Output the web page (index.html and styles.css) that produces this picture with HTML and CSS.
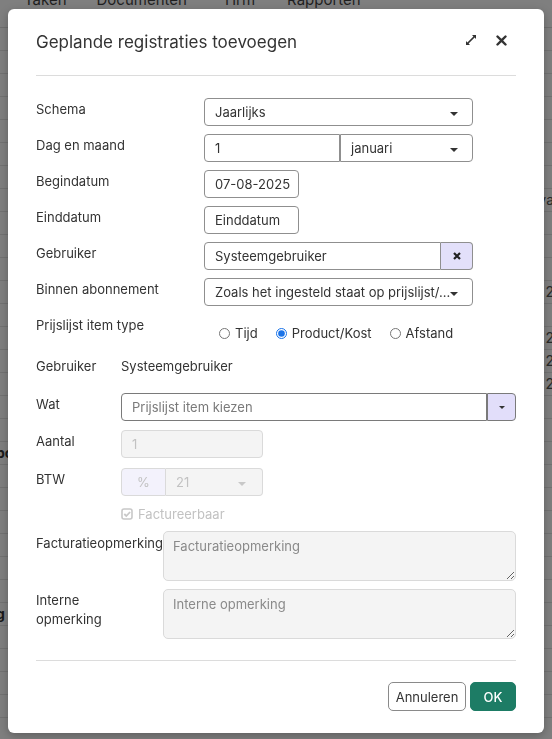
FILE: index.html
```html
<!DOCTYPE html>
<html lang="nl">
<head>
    <meta charset="UTF-8">
    <meta name="viewport" content="width=device-width, initial-scale=1.0">
    <title>Geplande registraties toevoegen</title>
    <link rel="stylesheet" href="styles.css">
</head>
<body>
    <!-- application behind the dialog -->
    <div class="app">
        <nav class="topnav">
            <span>Taken</span>
            <span>Documenten</span>
            <span>Hrm</span>
            <span>Rapporten</span>
        </nav>
        <div class="app-table">
            <div class="app-row"></div>
            <div class="app-row"></div>
            <div class="app-row"></div>
            <div class="app-row"></div>
            <div class="app-row"></div>
            <div class="app-row"></div>
            <div class="app-row"></div>
            <div class="app-row"><span class="app-cell-right">va</span></div>
            <div class="app-row"></div>
            <div class="app-row"></div>
            <div class="app-row"></div>
            <div class="app-row"><span class="app-cell-right">2</span></div>
            <div class="app-row"></div>
            <div class="app-row"><span class="app-cell-right">2</span></div>
            <div class="app-row"><span class="app-cell-right">2</span></div>
            <div class="app-row"><span class="app-cell-right">2</span></div>
            <div class="app-row"></div>
            <div class="app-row"></div>
            <div class="app-row"><span class="app-cell-left">pc</span></div>
            <div class="app-row"></div>
            <div class="app-row"></div>
            <div class="app-row"></div>
            <div class="app-row"></div>
            <div class="app-row"></div>
            <div class="app-row"></div>
            <div class="app-row"><span class="app-cell-left">g</span></div>
            <div class="app-row"></div>
            <div class="app-row"></div>
            <div class="app-row"></div>
            <div class="app-row"></div>
        </div>
    </div>

    <div class="modal">
        <div class="modal-header">
            <h1>Geplande registraties toevoegen</h1>
            <div class="modal-tools">
                <svg class="icon-expand" width="12" height="12" viewBox="0 0 12 12">
                    <path d="M7 1h4v4L9.6 3.6 3.6 9.6 5 11H1V7l1.4 1.4 6-6z" fill="#333"/>
                </svg>
                <svg class="icon-close" width="11" height="11" viewBox="0 0 11 11">
                    <path d="M1.5 1.5l8 8M9.5 1.5l-8 8" stroke="#333" stroke-width="2.4" stroke-linecap="round"/>
                </svg>
            </div>
        </div>

        <div class="modal-body">
            <div class="row">
                <label>Schema</label>
                <div class="select w-full">Jaarlijks<span class="caret"></span></div>
            </div>
            <div class="row">
                <label>Dag en maand</label>
                <div class="input w-day">1</div>
                <div class="select w-month">januari<span class="caret"></span></div>
            </div>
            <div class="row">
                <label>Begindatum</label>
                <div class="input w-date">07-08-2025</div>
            </div>
            <div class="row">
                <label>Einddatum</label>
                <div class="input w-date">Einddatum</div>
            </div>
            <div class="row">
                <label>Gebruiker</label>
                <div class="input-group w-full">
                    <div class="input grow">Systeemgebruiker</div>
                    <div class="addon addon-clear">
                        <svg width="8" height="8" viewBox="0 0 8 8">
                            <path d="M1 1l6 6M7 1L1 7" stroke="#222" stroke-width="2.2"/>
                        </svg>
                    </div>
                </div>
            </div>
            <div class="row">
                <label>Binnen abonnement</label>
                <div class="select w-full">Zoals het ingesteld staat op prijslijst/...<span class="caret"></span></div>
            </div>
            <div class="row row-radio">
                <label>Prijslijst item type</label>
                <div class="radios">
                    <label class="radio"><input type="radio" name="type"> Tijd</label>
                    <label class="radio"><input type="radio" name="type" checked> Product/Kost</label>
                    <label class="radio"><input type="radio" name="type"> Afstand</label>
                </div>
            </div>

            <div class="row row-narrow row-static">
                <label>Gebruiker</label>
                <div class="static">Systeemgebruiker</div>
            </div>
            <div class="row row-narrow row-wat">
                <label>Wat</label>
                <div class="input-group input-group-dark grow">
                    <div class="input placeholder grow">Prijslijst item kiezen</div>
                    <div class="addon addon-drop"><span class="caret caret-small"></span></div>
                </div>
            </div>
            <div class="row row-narrow">
                <label>Aantal</label>
                <div class="input disabled w-small">1</div>
            </div>
            <div class="row row-narrow row-btw">
                <label>BTW</label>
                <div class="input-group w-small">
                    <div class="addon addon-percent">%</div>
                    <div class="select disabled grow">21<span class="caret caret-light"></span></div>
                </div>
            </div>
            <div class="row row-narrow row-check">
                <label></label>
                <div class="check">
                    <svg width="12" height="12" viewBox="0 0 12 12">
                        <rect x="1" y="1" width="10" height="10" rx="2" fill="none" stroke="#c8c8c8" stroke-width="1.6"/>
                        <path d="M3.3 6l2 2 3.8-4" fill="none" stroke="#c8c8c8" stroke-width="1.8"/>
                    </svg>
                    Factureerbaar
                </div>
            </div>

            <div class="row row-wide">
                <label>Facturatieopmerking</label>
                <textarea class="textarea grow" placeholder="Facturatieopmerking"></textarea>
            </div>
            <div class="row row-wide">
                <label class="label-wrap">Interne opmerking</label>
                <textarea class="textarea grow" placeholder="Interne opmerking"></textarea>
            </div>
        </div>

        <div class="modal-footer">
            <button class="btn btn-cancel">Annuleren</button>
            <button class="btn btn-ok">OK</button>
        </div>
    </div>
</body>
</html>
```

FILE: styles.css
```css
* {
    box-sizing: border-box;
}

body {
    margin: 0;
    font-family: 'Inter', 'Liberation Sans', sans-serif;
    font-size: 13px;
    color: #333;
    background-color: #7f7f7f;
    height: 739px;
    overflow: hidden;
}

/* page behind the overlay */
.app {
    color: #1f1f1f;
}

.topnav {
    display: flex;
    height: 37px;
    margin-top: -9px;
    padding-left: 24px;
    font-size: 15px;
    line-height: 18px;
    border-bottom: 1px solid #6f6f6f;
}

.topnav span {
    margin-right: 30px;
}

.topnav span:nth-child(2) {
    margin-right: 38px;
}

.topnav span:nth-child(3) {
    margin-right: 32px;
}

.app-row {
    position: relative;
    height: 23px;
    border-bottom: 1px solid #727272;
    font-size: 14px;
    line-height: 22px;
}

.app-cell-right {
    position: absolute;
    right: -2px;
    color: #2a2a2a;
}

.app-cell-left {
    position: absolute;
    left: -4px;
    font-weight: bold;
    color: #1a1a1a;
}

/* dialog */
.modal {
    position: fixed;
    left: 8px;
    top: 9px;
    width: 536px;
    height: 724px;
    background: #fff;
    border-radius: 6px;
    padding: 0 28px;
    box-shadow: 0 3px 10px rgba(0, 0, 0, 0.25);
}

.modal-header {
    display: flex;
    align-items: center;
    justify-content: space-between;
    padding: 22px 0 22px;
    border-bottom: 1px solid #dcdcdc;
}

.modal-header h1 {
    margin: 0;
    font-size: 17px;
    line-height: 22px;
    font-weight: 400;
    color: #333;
}

.modal-tools {
    display: flex;
    align-items: center;
    gap: 18px;
    margin-right: 9px;
    margin-top: -4px;
}

.icon-expand {
    margin-right: 1px;
}

.modal-body {
    padding-top: 22px;
}

.row {
    display: flex;
    align-items: flex-start;
    margin-bottom: 8px;
}

.row > label {
    width: 168px;
    flex-shrink: 0;
    line-height: 20px;
    padding-top: 1px;
}

.row-narrow {
    margin-bottom: 10px;
}

.row-narrow > label {
    width: 85px;
}

.row-wide > label {
    width: 127px;
    padding-top: 2px;
}

.label-wrap {
    width: 80px !important;
    margin-right: 47px;
    line-height: 19px !important;
}

.grow {
    flex: 1;
    min-width: 0;
}

.w-full { width: 269px; }
.w-day { width: 136px; }
.w-month { width: 133px; }
.w-date { width: 95px; }
.w-small { width: 142px; }

.input,
.select {
    position: relative;
    height: 28px;
    line-height: 26px;
    padding: 0 10px;
    border: 1px solid #8f8f8f;
    border-radius: 4px;
    background: #fff;
    white-space: nowrap;
    overflow: hidden;
}

.w-day {
    border-radius: 4px 0 0 4px;
}

.w-month {
    border-radius: 0 4px 4px 0;
}

.caret {
    position: absolute;
    right: 14px;
    top: 13px;
    width: 0;
    height: 0;
    border-left: 4px solid transparent;
    border-right: 4px solid transparent;
    border-top: 4px solid #333;
}

.caret-small {
    position: static;
    display: block;
    border-left-width: 3px;
    border-right-width: 3px;
    border-top-width: 3px;
}

.caret-light {
    border-top-color: #c8c8c8;
    right: 16px;
}

.input-group {
    display: flex;
    height: 28px;
}

.input-group .input {
    border-radius: 4px 0 0 4px;
}

.addon {
    display: flex;
    align-items: center;
    justify-content: center;
    height: 28px;
    border: 1px solid #8f8f8f;
    border-left: none;
    border-radius: 0 4px 4px 0;
}

.addon-clear {
    width: 32px;
    background: #e3e0fa;
}

.input-group-dark .input,
.input-group-dark .addon {
    border-color: #7a7a7a;
}

.addon-drop {
    width: 29px;
    background: #e2defa;
    border-left: 1px solid #7a7a7a;
}

.placeholder {
    color: #7a7a7a;
}

.disabled {
    background: #f4f4f4;
    border-color: #dadada;
    color: #c2c2c2;
}

.addon-percent {
    width: 45px;
    border: 1px solid #dadada;
    border-radius: 4px 0 0 4px;
    background: #f3f2fc;
    color: #c2c2c2;
}

.input-group .select.disabled {
    border-left: none;
    border-radius: 0 4px 4px 0;
}

/* radio row */
.row-radio {
    margin-bottom: 10px;
    height: 28px;
}

.radios {
    display: flex;
    gap: 18px;
    padding-left: 15px;
    padding-top: 10px;
}

.radio {
    display: flex;
    align-items: center;
    gap: 5px;
    line-height: 18px;
}

.radio input {
    width: 11px;
    height: 11px;
    margin: 0;
    accent-color: #1a73e8;
}

/* second block: spacing per row */
.row-static {
    margin-bottom: 13px;
}

.static {
    line-height: 28px;
}

.row-static > label {
    line-height: 28px;
    padding-top: 0;
}

.row-wat {
    margin-bottom: 9px;
}

.row-btw {
    margin-bottom: 8px;
}

.row-check {
    margin-bottom: 7px;
}

.check {
    display: flex;
    align-items: center;
    gap: 5px;
    line-height: 20px;
    color: #c2c2c2;
}

.textarea {
    height: 50px;
    padding: 6px 9px;
    border: 1px solid #dadada;
    border-radius: 5px;
    background: #f4f4f4;
    font-family: inherit;
    font-size: 13px;
    color: #333;
    resize: vertical;
}

.textarea::placeholder {
    color: #8a8a8a;
}

/* footer */
.modal-footer {
    display: flex;
    justify-content: flex-end;
    gap: 4px;
    margin-top: 21px;
    padding-top: 21px;
    border-top: 1px solid #dcdcdc;
}

.btn {
    height: 29px;
    border-radius: 5px;
    font-family: inherit;
    font-size: 13px;
    cursor: pointer;
}

.btn-cancel {
    width: 78px;
    padding: 0;
    background: #fff;
    border: 1px solid #8a8a8a;
    color: #333;
}

.btn-ok {
    width: 46px;
    padding: 0;
    background: #1d7c65;
    border: 1px solid #1d7c65;
    color: #fff;
    font-weight: 500;
}
```
